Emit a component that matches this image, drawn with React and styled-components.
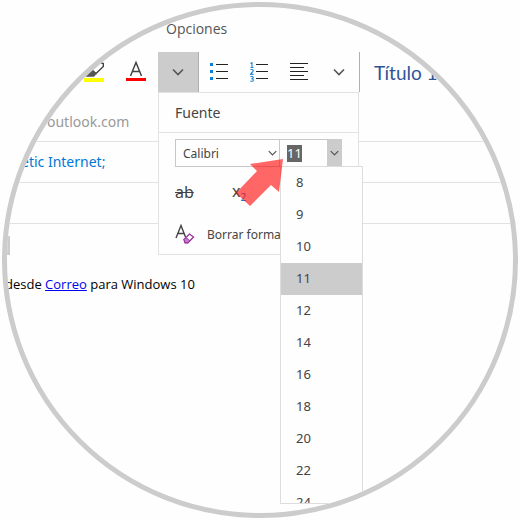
import { useState } from "react";
import styled, { createGlobalStyle } from "styled-components";

const SIZES = ["8", "9", "10", "11", "12", "14", "16", "18", "20", "22", "24"];

export default function App() {
  const [size, setSize] = useState("11");

  return (
    <>
      <GlobalStyle />
      <Lens>
        <Tabs>
          <Tab>Opciones</Tab>
        </Tabs>
        <Toolbar>
          <ToolButton $wide aria-label="Resaltado">
            <HighlighterIcon />
          </ToolButton>
          <ToolButton $wide aria-label="Color de fuente">
            <FontColorIcon />
          </ToolButton>
          <MoreFormat>
            <ToolButton $active aria-label="Más formato de fuente">
              <ChevronIcon $width={12} />
            </ToolButton>
            <Panel>
              <PanelTitle>Fuente</PanelTitle>
              <PanelBody>
                <Combos>
                  <FontCombo>
                    <FontSelect aria-label="Fuente" defaultValue="Calibri">
                      <option>Calibri</option>
                    </FontSelect>
                    <ChevronIcon $width={9} />
                  </FontCombo>
                  <SizeCombo>
                    <SizeInput
                      aria-label="Tamaño de fuente"
                      value={size}
                      onChange={(e) => setSize(e.target.value)}
                    />
                    <SizeToggle aria-label="Mostrar tamaños">
                      <ChevronIcon $width={9} />
                    </SizeToggle>
                    <SizeList role="listbox" aria-label="Tamaños">
                      {SIZES.map((s) => (
                        <SizeOption
                          key={s}
                          role="option"
                          aria-selected={s === size}
                          $selected={s === size}
                          onClick={() => setSize(s)}
                        >
                          {s}
                        </SizeOption>
                      ))}
                    </SizeList>
                  </SizeCombo>
                  <Pointer viewBox="0 0 48 48" aria-hidden="true">
                    <path
                      d="M47 0 L14 5 L21 12 L0 34 L14 47 L35 26 L43 33 Z"
                      fill="#ff0000"
                      fillOpacity="0.6"
                    />
                  </Pointer>
                </Combos>
                <StyleRow>
                  <StyleButton>
                    <s>ab</s>
                  </StyleButton>
                  <StyleButton>
                    x<sub>2</sub>
                  </StyleButton>
                </StyleRow>
                <ClearButton>
                  <ClearFormatIcon />
                  Borrar formato
                </ClearButton>
              </PanelBody>
            </Panel>
          </MoreFormat>
          <ToolButton aria-label="Viñetas">
            <BulletsIcon />
          </ToolButton>
          <ToolButton aria-label="Numeración">
            <NumberingIcon />
          </ToolButton>
          <ToolButton aria-label="Alineación">
            <AlignIcon />
          </ToolButton>
          <ToolButton aria-label="Más formato de párrafo">
            <ChevronIcon $width={12} />
          </ToolButton>
          <HeadingStyle>Título 1</HeadingStyle>
        </Toolbar>
        <FromRow>outlook.com</FromRow>
        <ToRow>etic Internet;</ToRow>
        <Row />
        <Message>
          <Caret />
          <Signature>
            desde <a href="#correo">Correo</a> para Windows 10
          </Signature>
        </Message>
      </Lens>
    </>
  );
}

function ChevronIcon({ $width }) {
  return (
    <Chevron $width={$width} viewBox="0 0 12 8" aria-hidden="true">
      <path d="M1 1.5 L6 6.5 L11 1.5" />
    </Chevron>
  );
}

function HighlighterIcon() {
  return (
    <svg width="22" height="24" viewBox="0 0 22 24" aria-hidden="true">
      <rect x="1" y="18" width="20" height="4" fill="#ffff00" />
      <path d="M9 10 L17.5 2.5 L20.3 3.5 L20.3 6.5 L13 13.5 Z" fill="#fff" stroke="#444" strokeWidth="1.4" />
      <path d="M8 9.5 L13.5 14 L11 16.8 L2.5 16.8 Z" fill="#555" />
    </svg>
  );
}

function FontColorIcon() {
  return (
    <svg width="22" height="24" viewBox="0 0 22 24" aria-hidden="true">
      <path d="M5.5 16 L11 2.5 L16.5 16 M7.3 11.5 H14.7" fill="none" stroke="#444" strokeWidth="1.5" />
      <rect x="1" y="18" width="20" height="3" fill="#ff0000" />
    </svg>
  );
}

function BulletsIcon() {
  return (
    <svg width="18" height="18" viewBox="0 0 18 18" aria-hidden="true">
      <path d="M0 0 h3 v3 h-3 z M0 7 h3 v3 h-3 z M0 14 h3 v3 h-3 z" fill="#0f7fd6" />
      <path d="M6 1 h12 v1 h-12 z M6 8 h12 v1 h-12 z M6 15 h12 v1 h-12 z" fill="#222" />
    </svg>
  );
}

function NumberingIcon() {
  return (
    <svg width="18" height="20" viewBox="0 0 18 20" aria-hidden="true">
      <path
        d="M0.5 1.5 L2 0.7 V5.5 M0.5 5.5 H3.5 M0.5 8 C1 7.3 3.3 7.3 3.2 8.8 C3.2 10 0.8 11 0.6 12.4 H3.6 M0.5 14.8 C1.3 14.3 3.2 14.3 3.2 15.6 C3.2 16.8 1.5 16.7 1.3 16.7 C2 16.7 3.4 16.8 3.4 18 C3.4 19.4 1.3 19.5 0.4 19"
        fill="none"
        stroke="#1a86d6"
        strokeWidth="1.1"
      />
      <path d="M6 2 h12 v1 h-12 z M6 9 h12 v1 h-12 z M6 16 h12 v1 h-12 z" fill="#222" />
    </svg>
  );
}

function AlignIcon() {
  return (
    <svg width="18" height="18" viewBox="0 0 18 18" aria-hidden="true">
      <path
        d="M0 0 h18 v1 h-18 z M0 4 h14 v1 h-14 z M0 8 h18 v1 h-18 z M0 12 h14 v1 h-14 z M0 16 h18 v1 h-18 z"
        fill="#222"
      />
    </svg>
  );
}

function ClearFormatIcon() {
  return (
    <svg width="20" height="20" viewBox="0 0 20 20" aria-hidden="true">
      <path d="M1 14 L6 1.5 L10.5 13 M2.7 9.5 H9" fill="none" stroke="#444" strokeWidth="1.4" />
      <path d="M9 15.5 L14.5 10 L18.5 13 L13 18.8 L10 18.8 Z" fill="#fff" stroke="#9b2fa0" strokeWidth="1.3" />
      <path d="M9 15.5 L11 13.5 L14.8 16.9 L13 18.8 L10 18.8 Z" fill="#c07fc6" stroke="#9b2fa0" strokeWidth="1" />
    </svg>
  );
}

const GlobalStyle = createGlobalStyle`
  * {
    box-sizing: border-box;
  }
  body {
    margin: 0;
    padding: 2px;
    background: #fefefe;
    color: #444444;
    font-family: "Noto Sans", "Open Sans", sans-serif;
    font-size: 12px;
  }
  button,
  input,
  select {
    margin: 0;
    padding: 0;
    border: none;
    border-radius: 0;
    outline: none;
    background: transparent;
    color: inherit;
    font: inherit;
  }
`;

const Lens = styled.main`
  width: 100%;
  aspect-ratio: 1;
  overflow: hidden;
  border: 5px solid #cccccc;
  border-radius: 50%;
  background: #fefefe;
  white-space: nowrap;
`;

const Tabs = styled.nav`
  display: flex;
  height: 45px;
  padding: 9px 0 0 159px;
`;

const Tab = styled.button`
  height: 24px;
  color: #555555;
  font-family: "Open Sans", sans-serif;
  font-size: 14px;
`;

const Toolbar = styled.div`
  display: flex;
  height: 40px;
  padding-left: 66px;
`;

const ToolButton = styled.button`
  display: flex;
  flex: none;
  align-items: center;
  justify-content: center;
  width: ${(props) => (props.$wide ? "42px" : "40px")};
  height: 40px;
  background: ${(props) => (props.$active ? "#cccccc" : "transparent")};
`;

const MoreFormat = styled.div`
  position: relative;
  margin-left: 1px;
  border-right: 1px solid #b0b0b0;
`;

const Chevron = styled.svg`
  flex: none;
  width: ${(props) => props.$width}px;
  height: 8px;
  fill: none;
  stroke: #555555;
  stroke-width: 1.6;
`;

const HeadingStyle = styled.button`
  padding-left: 14px;
  border-left: 1px solid #b0b0b0;
  color: #2f5496;
  font-family: Lato, "Open Sans", sans-serif;
  font-size: 19px;
`;

const Panel = styled.section`
  position: absolute;
  top: 100%;
  left: 0;
  z-index: 1;
  width: 201px;
  border: 1px solid #e2e2e2;
  background: #fefefe;
`;

const PanelTitle = styled.h2`
  margin: 0;
  padding-left: 16px;
  border-bottom: 1px solid #e2e2e2;
  font-size: 14px;
  font-weight: 400;
  line-height: 39px;
`;

const PanelBody = styled.div`
  padding: 6px 16px 3px;
`;

const Combos = styled.div`
  position: relative;
  display: flex;
  height: 28px;
`;

const FontCombo = styled.label`
  display: flex;
  align-items: center;
  width: 105px;
  padding-right: 2px;
  border: 1px solid #c8c8c8;
`;

const FontSelect = styled.select`
  flex: 1;
  padding-left: 7px;
  appearance: none;
`;

const SizeCombo = styled.div`
  position: relative;
  display: flex;
  align-items: center;
  justify-content: space-between;
  width: 62px;
  padding-left: 7px;
  border-top: 1px solid #c8c8c8;
  border-bottom: 1px solid #c8c8c8;
`;

const SizeInput = styled.input`
  width: 15px;
  height: 17px;
  background: #666666;
  color: #ffffff;
  font-size: 13px;
`;

const SizeToggle = styled.button`
  display: flex;
  align-items: center;
  justify-content: center;
  width: 15px;
  height: 28px;
  background: #cccccc;
`;

const SizeList = styled.div`
  position: absolute;
  top: 100%;
  left: 0;
  z-index: 1;
  display: flex;
  flex-direction: column;
  width: 83px;
  height: 338px;
  overflow: hidden;
  border: 1px solid #dddddd;
  background: #fefefe;
`;

const SizeOption = styled.button`
  flex: none;
  height: 32px;
  padding: 0 0 2px 15px;
  background: ${(props) => (props.$selected ? "#cccccc" : "transparent")};
  font-size: 13px;
  text-align: left;
`;

const Pointer = styled.svg`
  position: absolute;
  top: 20px;
  left: 61px;
  z-index: 2;
  width: 48px;
  height: 48px;
`;

const StyleRow = styled.div`
  display: flex;
  height: 50px;
`;

const StyleButton = styled.button`
  width: 57px;
  font-size: 16px;
  text-align: left;

  s {
    text-decoration-thickness: 1px;
  }

  sub {
    color: #0f7fd6;
    font-size: 10px;
  }
`;

const ClearButton = styled.button`
  display: flex;
  align-items: center;
  gap: 12px;
  width: 100%;
  height: 34px;
`;

const Row = styled.div`
  height: 41px;
  border-bottom: 1px solid #e2e2e2;
  line-height: 40px;
  font-size: 14px;
`;

const FromRow = styled(Row)`
  height: 50px;
  padding-left: 40px;
  color: #999999;
  line-height: 60px;
`;

const ToRow = styled(Row)`
  padding-left: 14px;
  color: #0078d7;
`;

const Message = styled.article`
  padding-top: 12px;
`;

const Caret = styled.div`
  width: 3px;
  height: 19px;
  background: #cccccc;
`;

const Signature = styled.p`
  margin: 19px 0 0 -2px;
  color: #000000;
  font-family: "Open Sans", sans-serif;
  font-size: 13px;
  line-height: 20px;

  a {
    color: #0000ee;
  }
`;
